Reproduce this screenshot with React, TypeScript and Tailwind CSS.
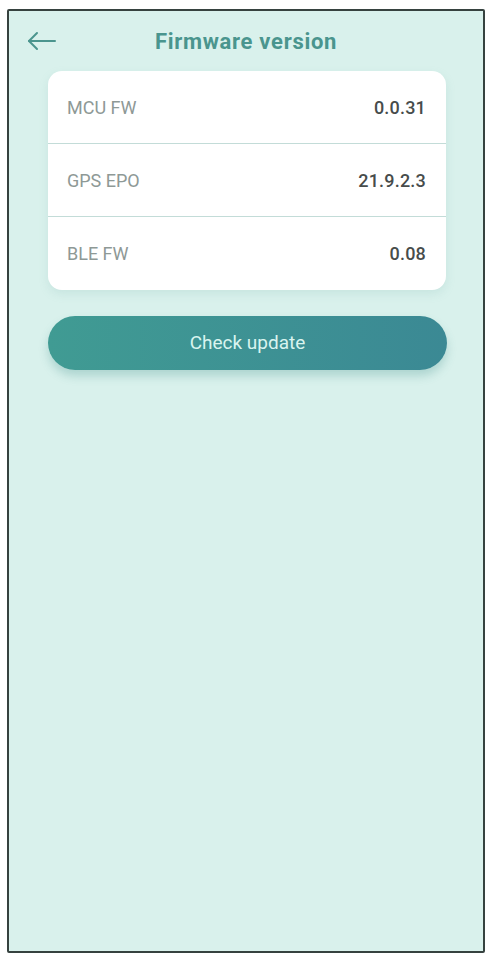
import React from 'react';

const ROWS = [
  { label: 'MCU FW', value: '0.0.31' },
  { label: 'GPS EPO', value: '21.9.2.3' },
  { label: 'BLE FW', value: '0.08' },
];

function BackArrow() {
  return (
    <svg width="30" height="20" viewBox="0 0 30 20" fill="none" stroke="#4b958e" strokeWidth="2" strokeLinecap="round" strokeLinejoin="round">
      <path d="M2 10h26" />
      <path d="M10 2 2 10l8 8" />
    </svg>
  );
}

export default function App() {
  return (
    <div className="w-[487px] h-[956px] bg-white pt-[9px] pl-[7px]" style={{ fontFamily: 'Roboto, "Noto Sans", sans-serif' }}>
      <div className="w-[478px] h-[944px] border-2 border-[#36423f] bg-[#d9f1ec] rounded-[2px] flex flex-col">
        {/* Header */}
        <div className="h-[60px] flex items-center px-[18px] relative">
          <BackArrow />
          <h1 className="flex-1 text-center text-[22px] font-bold text-[#4a958e] pr-[30px] tracking-[0.7px]">
            Firmware version
          </h1>
        </div>

        {/* Versions card */}
        <div className="ml-[39px] mr-[37px] bg-white rounded-[14px] shadow-[0_4px_10px_rgba(120,180,172,0.18)]">
          {ROWS.map((row, i) => (
            <div
              key={row.label}
              className={`h-[73px] flex items-center justify-between pl-[19px] pr-[20px] ${i < ROWS.length - 1 ? 'border-b-[1.5px] border-[#c3dcd8]' : ''}`}
            >
              <span className="text-[18px] text-[#8e9996]">{row.label}</span>
              <span className="text-[18px] font-medium text-[#474c4b] tracking-[0.2px]">{row.value}</span>
            </div>
          ))}
        </div>

        {/* Check update */}
        <button
          type="button"
          className="mt-[26px] ml-[39px] mr-[36px] h-[54px] rounded-full bg-gradient-to-r from-[#409b93] to-[#3b8994] text-[19px] text-[#d9f4ef] shadow-[0_6px_10px_rgba(60,140,135,0.28)]"
        >
          Check update
        </button>
      </div>
    </div>
  );
}
